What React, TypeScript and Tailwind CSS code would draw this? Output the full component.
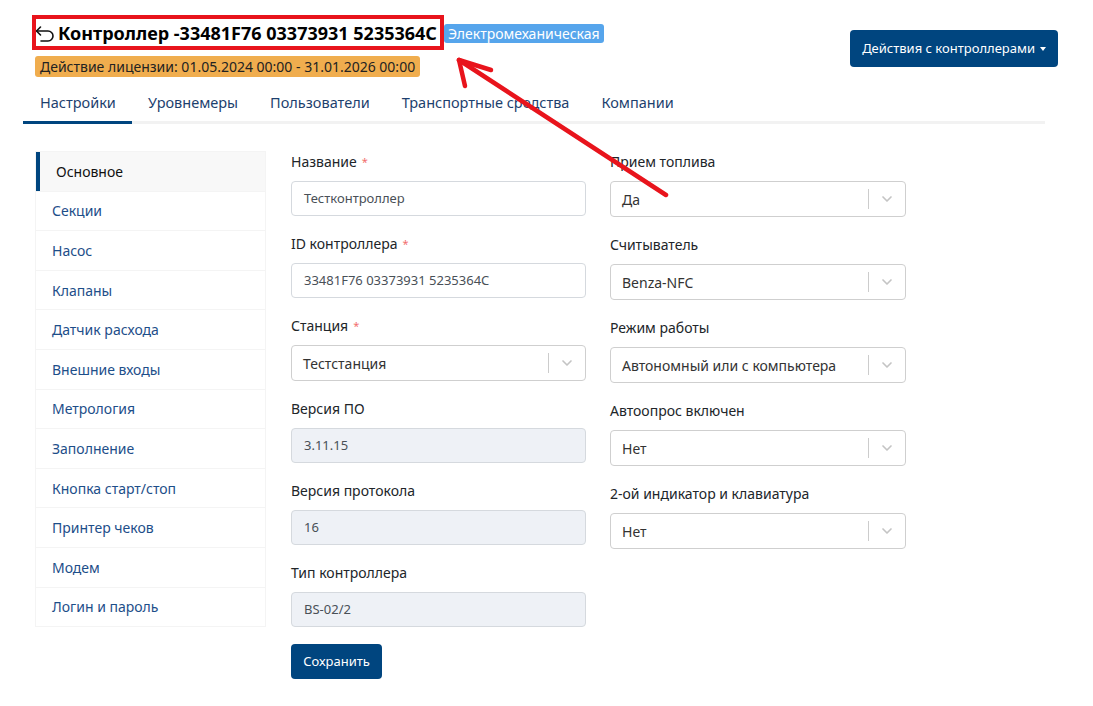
import { ChevronDown } from 'lucide-react'

const tabs = ['Настройки', 'Уровнемеры', 'Пользователи', 'Транспортные средства', 'Компании']

const menu = [
  'Основное',
  'Секции',
  'Насос',
  'Клапаны',
  'Датчик расхода',
  'Внешние входы',
  'Метрология',
  'Заполнение',
  'Кнопка старт/стоп',
  'Принтер чеков',
  'Модем',
  'Логин и пароль',
]

function Label({ text, required }: { text: string; required?: boolean }) {
  return (
    <div className="h-[20px] mb-[9px] text-[14px] leading-[20px] text-[#212529]">
      {text}
      {required && <span className="text-[#f26d6d] text-[11px] align-top ml-[5px]">*</span>}
    </div>
  )
}

function Input({ value, disabled }: { value: string; disabled?: boolean }) {
  return (
    <div
      className={`h-[35px] rounded-[4px] border border-[#d5d9de] px-[12px] flex items-center text-[13px] text-[#495057] ${
        disabled ? 'bg-[#eef1f6]' : 'bg-white'
      }`}
    >
      {value}
    </div>
  )
}

function Select({ value }: { value: string }) {
  return (
    <div className="h-[36px] rounded-[4px] border border-[#cfcfcf] bg-white flex items-center text-[14px] text-[#333]">
      <div className="flex-1 pl-[11px]">{value}</div>
      <div className="w-px h-[20px] bg-[#cccccc]" />
      <div className="w-[36px] flex justify-center">
        <ChevronDown className="w-[16px] h-[16px] text-[#c4c4c4]" strokeWidth={2.5} />
      </div>
    </div>
  )
}

function Field({ children }: { children: React.ReactNode }) {
  return <div className="mb-[18px]">{children}</div>
}

export default function App() {
  return (
    <div className="relative w-[1093px] h-[706px] bg-white overflow-hidden font-['Noto_Sans',sans-serif]">
      {/* header */}
      <div className="flex justify-between pl-[35px] pr-[35px] pt-[22px]">
        <div>
          <div className="flex items-center h-[22px]">
            <svg width="20" height="17" viewBox="0 0 20 17" className="mr-[3px]" fill="none" stroke="#111" strokeWidth="1.6" strokeLinecap="round" strokeLinejoin="round">
              <path d="M5.5 2 L1.5 6 L5.5 10" />
              <path d="M1.5 6 H13 A5 5 0 0 1 13 16 H6" />
            </svg>
            <span className="text-[18px] font-bold text-black">Контроллер -33481F76 03373931 5235364C</span>
            <span className="ml-[7px] h-[19px] px-[4px] rounded-[3px] bg-[#56a5ec] text-white text-[14px] leading-[19px]">
              Электромеханическая
            </span>
          </div>
          <div className="mt-[12px] inline-flex h-[21px] items-center px-[5px] rounded-[3px] bg-[#f0ad4e] text-[14px] text-[#222]">
            Действие лицензии: 01.05.2024 00:00 - 31.01.2026 00:00
          </div>
        </div>
        <button className="mt-[8px] h-[37px] px-[12px] rounded-[4px] bg-[#00457f] text-white text-[13px] flex items-center gap-[5px]">
          Действия с контроллерами
          <span className="w-0 h-0 border-l-[3.5px] border-r-[3.5px] border-t-[4px] border-l-transparent border-r-transparent border-t-white" />
        </button>
      </div>

      {/* tabs */}
      <div className="mt-[8px] ml-[23px] mr-[48px] flex border-b-[3px] border-[#f2f2f2] h-[38px]">
        {tabs.map((t, i) => (
          <div
            key={t}
            className={`px-[16px] pt-[6px] text-[14.5px] text-[#1d3f6e] ${
              i === 0 ? 'pl-[17px] border-b-[3px] border-[#00457f] -mb-[3px]' : ''
            }`}
          >
            {t}
          </div>
        ))}
      </div>

      {/* body */}
      <div className="flex items-start mt-[27px] ml-[35px]">
        <div className="w-[231px] flex flex-col gap-[1px] bg-[#f4f4f4] border border-[#f4f4f4]">
          {menu.map((m, i) =>
            i === 0 ? (
              <div key={m} className="h-[38.6px] flex items-center pl-[16px] bg-[#f8f8f8] border-l-[4px] border-[#00457f] text-[14px] text-[#111]">
                {m}
              </div>
            ) : (
              <div key={m} className="h-[38.6px] flex items-center pl-[16px] bg-white text-[14px] text-[#1d4e89]">
                {m}
              </div>
            )
          )}
        </div>

        <div className="ml-[25px] w-[295px] pt-[1px]">
          <Field>
            <Label text="Название" required />
            <Input value="Тестконтроллер" />
          </Field>
          <Field>
            <Label text="ID контроллера" required />
            <Input value="33481F76 03373931 5235364C" />
          </Field>
          <Field>
            <Label text="Станция" required />
            <Select value="Тестстанция" />
          </Field>
          <Field>
            <Label text="Версия ПО" />
            <Input value="3.11.15" disabled />
          </Field>
          <Field>
            <Label text="Версия протокола" />
            <Input value="16" disabled />
          </Field>
          <div className="mb-[17px]">
            <Label text="Тип контроллера" />
            <Input value="BS-02/2" disabled />
          </div>
          <button className="h-[35px] w-[91px] rounded-[4px] bg-[#00457f] text-white text-[13px]">Сохранить</button>
        </div>

        <div className="ml-[24px] w-[296px] pt-[1px]">
          <Field>
            <Label text="Прием топлива" />
            <Select value="Да" />
          </Field>
          <Field>
            <Label text="Считыватель" />
            <Select value="Benza-NFC" />
          </Field>
          <Field>
            <Label text="Режим работы" />
            <Select value="Автономный или с компьютера" />
          </Field>
          <Field>
            <Label text="Автоопрос включен" />
            <Select value="Нет" />
          </Field>
          <Field>
            <Label text="2-ой индикатор и клавиатура" />
            <Select value="Нет" />
          </Field>
        </div>
      </div>

      {/* annotation */}
      <div className="absolute left-[32px] top-[15px] w-[412px] h-[35px] border-[4px] border-[#e8141c] pointer-events-none" />
      <svg className="absolute left-0 top-0 pointer-events-none" width="1093" height="706">
        <g stroke="#e8141c" strokeWidth="4.5" strokeLinecap="round" fill="none">
          <path d="M666 195 L459 60" />
          <path d="M459 60 L491 70" />
          <path d="M459 60 L465 86" />
        </g>
      </svg>
    </div>
  )
}
